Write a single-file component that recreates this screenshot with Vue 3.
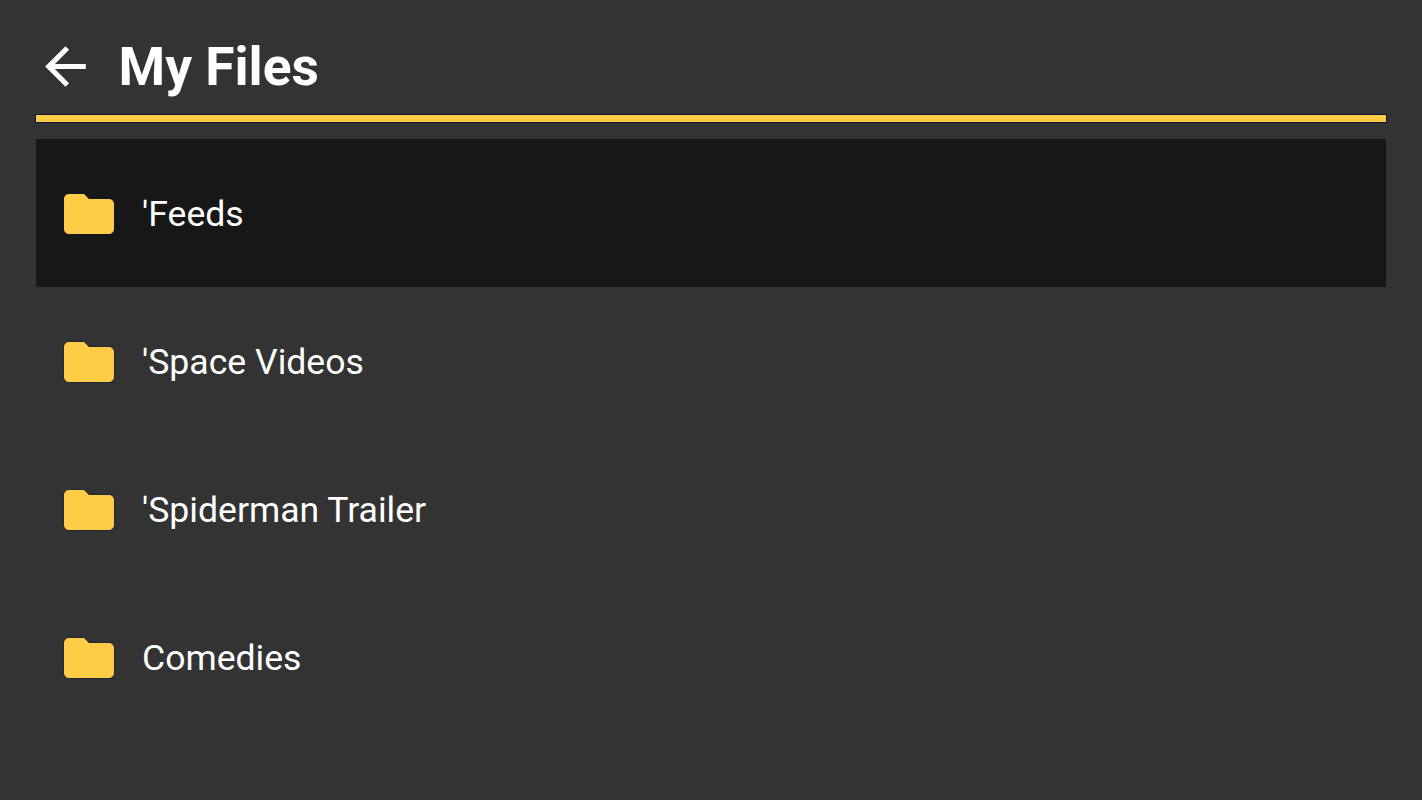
<script setup>
import { ref } from 'vue'

const selected = ref(0)
const folders = ref(["'Feeds", "'Space Videos", "'Spiderman Trailer", 'Comedies'])
</script>

<template>
  <div class="files-page">
    <header>
      <button class="back" aria-label="Back">
        <svg viewBox="0 0 24 24">
          <path d="M20 11H7.83l5.59-5.59L12 4l-8 8 8 8 1.41-1.41L7.83 13H20v-2z" />
        </svg>
      </button>
      <h1>My Files</h1>
    </header>
    <div class="divider"></div>
    <ul class="folder-list">
      <li
        v-for="(folder, index) in folders"
        :key="folder"
        :class="{ selected: index === selected }"
        @click="selected = index"
      >
        <svg class="folder-icon" viewBox="2 4 20 16">
          <path d="M10 4H4c-1.1 0-1.99.9-1.99 2L2 18c0 1.1.9 2 2 2h16c1.1 0 2-.9 2-2V8c0-1.1-.9-2-2-2h-8l-2-2z" />
        </svg>
        <span>{{ folder }}</span>
      </li>
    </ul>
  </div>
</template>

<style>
body {
  background: #333;
}
</style>

<style scoped>
.files-page {
  height: 100vh;
  box-sizing: border-box;
  padding: 18px 36px 0;
  overflow: hidden;
  background: #333;
  color: #fff;
  font-family: Roboto, sans-serif;
}

header {
  display: flex;
  align-items: center;
  height: 97px;
}

.back {
  width: 61px;
  height: 61px;
  margin-left: -1px;
  padding: 0;
  border: none;
  background: none;
  cursor: pointer;
}

.back svg {
  display: block;
  width: 61px;
  height: 61px;
  fill: #fff;
}

h1 {
  margin: 0 0 0 22.5px;
  font-size: 53.3px;
  font-weight: 700;
}

.divider {
  height: 7px;
  background: #ffcd45;
  box-shadow: 0 0 0 1px #10103a;
}

.folder-list {
  margin: 17px 0 0;
  padding: 0;
  list-style: none;
}

li {
  display: flex;
  align-items: center;
  gap: 28px;
  height: 148.15px;
  box-sizing: border-box;
  padding: 1px 0 0 28px;
  font-size: 35.6px;
  cursor: pointer;
}

li.selected {
  background: #171717;
}

.folder-icon {
  width: 50px;
  height: 40px;
  overflow: visible;
  fill: #ffcd45;
  stroke: #10103a;
  stroke-width: 0.5;
  stroke-opacity: 0.6;
  paint-order: stroke;
}
</style>
